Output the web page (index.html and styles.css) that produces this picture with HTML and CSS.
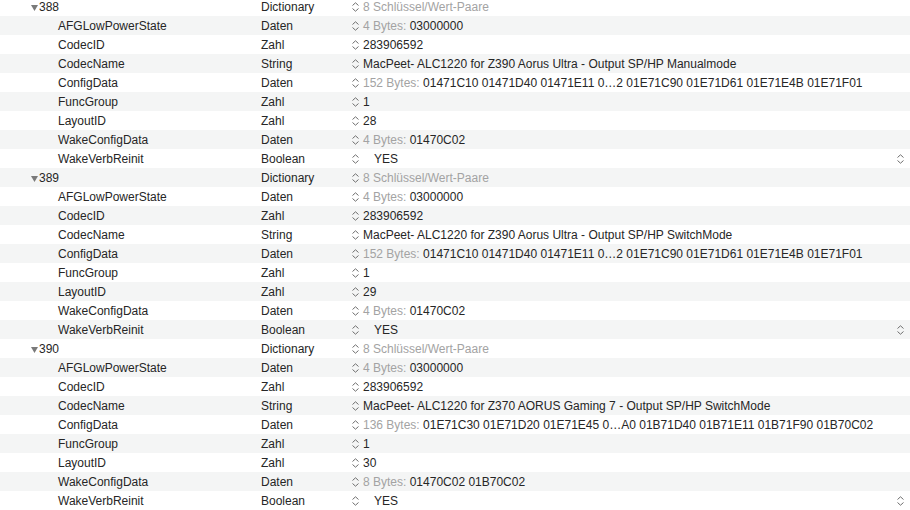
FILE: index.html
```html
<!DOCTYPE html>
<html>
<head>
<meta charset="utf-8">
<link rel="stylesheet" href="styles.css">
</head>
<body>
<div class="list">
  <div class="row parent"><div class="key"><svg class="tri" width="7" height="6" viewBox="0 0 7 6"><path d="M0 0H7L3.5 6Z" fill="#7a7a7a"/></svg>388</div><div class="type">Dictionary</div><div class="val"><svg class="chev" width="7" height="10" viewBox="0 0 7 10"><path d="M0.5 3.5L3.5 0.8L6.5 3.5M0.5 6.5L3.5 9.2L6.5 6.5" fill="none" stroke="#6e6e6e" stroke-width="1"/></svg><span class="dim">8 Schlüssel/Wert-Paare</span></div></div>
  <div class="row"><div class="key">AFGLowPowerState</div><div class="type">Daten</div><div class="val"><svg class="chev" width="7" height="10" viewBox="0 0 7 10"><path d="M0.5 3.5L3.5 0.8L6.5 3.5M0.5 6.5L3.5 9.2L6.5 6.5" fill="none" stroke="#6e6e6e" stroke-width="1"/></svg><span class="dim">4 Bytes:</span>&nbsp;03000000</div></div>
  <div class="row"><div class="key">CodecID</div><div class="type">Zahl</div><div class="val"><svg class="chev" width="7" height="10" viewBox="0 0 7 10"><path d="M0.5 3.5L3.5 0.8L6.5 3.5M0.5 6.5L3.5 9.2L6.5 6.5" fill="none" stroke="#6e6e6e" stroke-width="1"/></svg>283906592</div></div>
  <div class="row"><div class="key">CodecName</div><div class="type">String</div><div class="val"><svg class="chev" width="7" height="10" viewBox="0 0 7 10"><path d="M0.5 3.5L3.5 0.8L6.5 3.5M0.5 6.5L3.5 9.2L6.5 6.5" fill="none" stroke="#6e6e6e" stroke-width="1"/></svg>MacPeet- ALC1220 for Z390 Aorus Ultra - Output SP/HP Manualmode</div></div>
  <div class="row"><div class="key">ConfigData</div><div class="type">Daten</div><div class="val"><svg class="chev" width="7" height="10" viewBox="0 0 7 10"><path d="M0.5 3.5L3.5 0.8L6.5 3.5M0.5 6.5L3.5 9.2L6.5 6.5" fill="none" stroke="#6e6e6e" stroke-width="1"/></svg><span class="dim">152 Bytes:</span>&nbsp;01471C10 01471D40 01471E11 0…2 01E71C90 01E71D61 01E71E4B 01E71F01</div></div>
  <div class="row"><div class="key">FuncGroup</div><div class="type">Zahl</div><div class="val"><svg class="chev" width="7" height="10" viewBox="0 0 7 10"><path d="M0.5 3.5L3.5 0.8L6.5 3.5M0.5 6.5L3.5 9.2L6.5 6.5" fill="none" stroke="#6e6e6e" stroke-width="1"/></svg>1</div></div>
  <div class="row"><div class="key">LayoutID</div><div class="type">Zahl</div><div class="val"><svg class="chev" width="7" height="10" viewBox="0 0 7 10"><path d="M0.5 3.5L3.5 0.8L6.5 3.5M0.5 6.5L3.5 9.2L6.5 6.5" fill="none" stroke="#6e6e6e" stroke-width="1"/></svg>28</div></div>
  <div class="row"><div class="key">WakeConfigData</div><div class="type">Daten</div><div class="val"><svg class="chev" width="7" height="10" viewBox="0 0 7 10"><path d="M0.5 3.5L3.5 0.8L6.5 3.5M0.5 6.5L3.5 9.2L6.5 6.5" fill="none" stroke="#6e6e6e" stroke-width="1"/></svg><span class="dim">4 Bytes:</span>&nbsp;01470C02</div></div>
  <div class="row"><div class="key">WakeVerbReinit</div><div class="type">Boolean</div><div class="val bool"><svg class="chev" width="7" height="10" viewBox="0 0 7 10"><path d="M0.5 3.5L3.5 0.8L6.5 3.5M0.5 6.5L3.5 9.2L6.5 6.5" fill="none" stroke="#6e6e6e" stroke-width="1"/></svg><span class="yes">YES</span><svg class="chev end" width="7" height="10" viewBox="0 0 7 10"><path d="M0.5 3.5L3.5 0.8L6.5 3.5M0.5 6.5L3.5 9.2L6.5 6.5" fill="none" stroke="#6e6e6e" stroke-width="1"/></svg></div></div>

  <div class="row parent"><div class="key"><svg class="tri" width="7" height="6" viewBox="0 0 7 6"><path d="M0 0H7L3.5 6Z" fill="#7a7a7a"/></svg>389</div><div class="type">Dictionary</div><div class="val"><svg class="chev" width="7" height="10" viewBox="0 0 7 10"><path d="M0.5 3.5L3.5 0.8L6.5 3.5M0.5 6.5L3.5 9.2L6.5 6.5" fill="none" stroke="#6e6e6e" stroke-width="1"/></svg><span class="dim">8 Schlüssel/Wert-Paare</span></div></div>
  <div class="row"><div class="key">AFGLowPowerState</div><div class="type">Daten</div><div class="val"><svg class="chev" width="7" height="10" viewBox="0 0 7 10"><path d="M0.5 3.5L3.5 0.8L6.5 3.5M0.5 6.5L3.5 9.2L6.5 6.5" fill="none" stroke="#6e6e6e" stroke-width="1"/></svg><span class="dim">4 Bytes:</span>&nbsp;03000000</div></div>
  <div class="row"><div class="key">CodecID</div><div class="type">Zahl</div><div class="val"><svg class="chev" width="7" height="10" viewBox="0 0 7 10"><path d="M0.5 3.5L3.5 0.8L6.5 3.5M0.5 6.5L3.5 9.2L6.5 6.5" fill="none" stroke="#6e6e6e" stroke-width="1"/></svg>283906592</div></div>
  <div class="row"><div class="key">CodecName</div><div class="type">String</div><div class="val"><svg class="chev" width="7" height="10" viewBox="0 0 7 10"><path d="M0.5 3.5L3.5 0.8L6.5 3.5M0.5 6.5L3.5 9.2L6.5 6.5" fill="none" stroke="#6e6e6e" stroke-width="1"/></svg>MacPeet- ALC1220 for Z390 Aorus Ultra - Output SP/HP SwitchMode</div></div>
  <div class="row"><div class="key">ConfigData</div><div class="type">Daten</div><div class="val"><svg class="chev" width="7" height="10" viewBox="0 0 7 10"><path d="M0.5 3.5L3.5 0.8L6.5 3.5M0.5 6.5L3.5 9.2L6.5 6.5" fill="none" stroke="#6e6e6e" stroke-width="1"/></svg><span class="dim">152 Bytes:</span>&nbsp;01471C10 01471D40 01471E11 0…2 01E71C90 01E71D61 01E71E4B 01E71F01</div></div>
  <div class="row"><div class="key">FuncGroup</div><div class="type">Zahl</div><div class="val"><svg class="chev" width="7" height="10" viewBox="0 0 7 10"><path d="M0.5 3.5L3.5 0.8L6.5 3.5M0.5 6.5L3.5 9.2L6.5 6.5" fill="none" stroke="#6e6e6e" stroke-width="1"/></svg>1</div></div>
  <div class="row"><div class="key">LayoutID</div><div class="type">Zahl</div><div class="val"><svg class="chev" width="7" height="10" viewBox="0 0 7 10"><path d="M0.5 3.5L3.5 0.8L6.5 3.5M0.5 6.5L3.5 9.2L6.5 6.5" fill="none" stroke="#6e6e6e" stroke-width="1"/></svg>29</div></div>
  <div class="row"><div class="key">WakeConfigData</div><div class="type">Daten</div><div class="val"><svg class="chev" width="7" height="10" viewBox="0 0 7 10"><path d="M0.5 3.5L3.5 0.8L6.5 3.5M0.5 6.5L3.5 9.2L6.5 6.5" fill="none" stroke="#6e6e6e" stroke-width="1"/></svg><span class="dim">4 Bytes:</span>&nbsp;01470C02</div></div>
  <div class="row"><div class="key">WakeVerbReinit</div><div class="type">Boolean</div><div class="val bool"><svg class="chev" width="7" height="10" viewBox="0 0 7 10"><path d="M0.5 3.5L3.5 0.8L6.5 3.5M0.5 6.5L3.5 9.2L6.5 6.5" fill="none" stroke="#6e6e6e" stroke-width="1"/></svg><span class="yes">YES</span><svg class="chev end" width="7" height="10" viewBox="0 0 7 10"><path d="M0.5 3.5L3.5 0.8L6.5 3.5M0.5 6.5L3.5 9.2L6.5 6.5" fill="none" stroke="#6e6e6e" stroke-width="1"/></svg></div></div>

  <div class="row parent"><div class="key"><svg class="tri" width="7" height="6" viewBox="0 0 7 6"><path d="M0 0H7L3.5 6Z" fill="#7a7a7a"/></svg>390</div><div class="type">Dictionary</div><div class="val"><svg class="chev" width="7" height="10" viewBox="0 0 7 10"><path d="M0.5 3.5L3.5 0.8L6.5 3.5M0.5 6.5L3.5 9.2L6.5 6.5" fill="none" stroke="#6e6e6e" stroke-width="1"/></svg><span class="dim">8 Schlüssel/Wert-Paare</span></div></div>
  <div class="row"><div class="key">AFGLowPowerState</div><div class="type">Daten</div><div class="val"><svg class="chev" width="7" height="10" viewBox="0 0 7 10"><path d="M0.5 3.5L3.5 0.8L6.5 3.5M0.5 6.5L3.5 9.2L6.5 6.5" fill="none" stroke="#6e6e6e" stroke-width="1"/></svg><span class="dim">4 Bytes:</span>&nbsp;03000000</div></div>
  <div class="row"><div class="key">CodecID</div><div class="type">Zahl</div><div class="val"><svg class="chev" width="7" height="10" viewBox="0 0 7 10"><path d="M0.5 3.5L3.5 0.8L6.5 3.5M0.5 6.5L3.5 9.2L6.5 6.5" fill="none" stroke="#6e6e6e" stroke-width="1"/></svg>283906592</div></div>
  <div class="row"><div class="key">CodecName</div><div class="type">String</div><div class="val"><svg class="chev" width="7" height="10" viewBox="0 0 7 10"><path d="M0.5 3.5L3.5 0.8L6.5 3.5M0.5 6.5L3.5 9.2L6.5 6.5" fill="none" stroke="#6e6e6e" stroke-width="1"/></svg>MacPeet- ALC1220 for Z370 AORUS Gaming 7 - Output SP/HP SwitchMode</div></div>
  <div class="row"><div class="key">ConfigData</div><div class="type">Daten</div><div class="val"><svg class="chev" width="7" height="10" viewBox="0 0 7 10"><path d="M0.5 3.5L3.5 0.8L6.5 3.5M0.5 6.5L3.5 9.2L6.5 6.5" fill="none" stroke="#6e6e6e" stroke-width="1"/></svg><span class="dim">136 Bytes:</span>&nbsp;01E71C30 01E71D20 01E71E45 0…A0 01B71D40 01B71E11 01B71F90 01B70C02</div></div>
  <div class="row"><div class="key">FuncGroup</div><div class="type">Zahl</div><div class="val"><svg class="chev" width="7" height="10" viewBox="0 0 7 10"><path d="M0.5 3.5L3.5 0.8L6.5 3.5M0.5 6.5L3.5 9.2L6.5 6.5" fill="none" stroke="#6e6e6e" stroke-width="1"/></svg>1</div></div>
  <div class="row"><div class="key">LayoutID</div><div class="type">Zahl</div><div class="val"><svg class="chev" width="7" height="10" viewBox="0 0 7 10"><path d="M0.5 3.5L3.5 0.8L6.5 3.5M0.5 6.5L3.5 9.2L6.5 6.5" fill="none" stroke="#6e6e6e" stroke-width="1"/></svg>30</div></div>
  <div class="row"><div class="key">WakeConfigData</div><div class="type">Daten</div><div class="val"><svg class="chev" width="7" height="10" viewBox="0 0 7 10"><path d="M0.5 3.5L3.5 0.8L6.5 3.5M0.5 6.5L3.5 9.2L6.5 6.5" fill="none" stroke="#6e6e6e" stroke-width="1"/></svg><span class="dim">8 Bytes:</span>&nbsp;01470C02 01B70C02</div></div>
  <div class="row"><div class="key">WakeVerbReinit</div><div class="type">Boolean</div><div class="val bool"><svg class="chev" width="7" height="10" viewBox="0 0 7 10"><path d="M0.5 3.5L3.5 0.8L6.5 3.5M0.5 6.5L3.5 9.2L6.5 6.5" fill="none" stroke="#6e6e6e" stroke-width="1"/></svg><span class="yes">YES</span><svg class="chev end" width="7" height="10" viewBox="0 0 7 10"><path d="M0.5 3.5L3.5 0.8L6.5 3.5M0.5 6.5L3.5 9.2L6.5 6.5" fill="none" stroke="#6e6e6e" stroke-width="1"/></svg></div></div>
</div>
</body>
</html>
```
FILE: styles.css
```css
html, body {
  margin: 0;
  padding: 0;
  background: #ffffff;
  overflow: hidden;
}
body {
  font-family: "Liberation Sans", Arial, sans-serif;
  font-size: 12px;
  color: #262626;
}
.list {
  margin-top: -3px;
}
.row {
  display: grid;
  grid-template-columns: 261px 91px 1fr;
  height: 19px;
  line-height: 17px;
  white-space: nowrap;
}
.row:nth-child(even) {
  background: #f4f5f5;
}
.row > div {
  box-sizing: border-box;
  height: 19px;
  padding-top: 2px;
  display: flex;
  align-items: center;
}
.key {
  padding-left: 58px;
}
.parent .key {
  padding-left: 31px;
}
.tri {
  margin-right: 1px;
  flex: none;
}
.val {
  padding-right: 6px;
}
.chev {
  flex: none;
  margin-top: -1px;
  margin-right: 4px;
}
.dim {
  color: #a3a3a3;
}
.yes {
  margin-left: 11px;
}
.chev.end {
  margin-left: auto;
  margin-right: 0;
}
```
